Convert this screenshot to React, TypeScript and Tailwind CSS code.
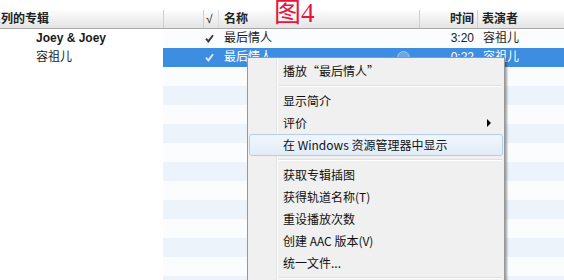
import React from "react";

const FONT = { fontFamily: '"Liberation Sans", "Noto Sans CJK SC", sans-serif' };

interface Track {
  album?: string;
  albumBold?: boolean;
  name?: string;
  time?: string;
  artist?: string;
  selected?: boolean;
}

const tracks: Track[] = [
  { album: "Joey & Joey", albumBold: true, name: "最后情人", time: "3:20", artist: "容祖儿" },
  { album: "容祖儿", name: "最后情人", time: "0:22", artist: "容祖儿", selected: true },
];

function Check({ light }: { light?: boolean }) {
  return (
    <svg width="9" height="9" viewBox="0 0 9 9">
      <path
        d="M1 4.6 L3.4 7.4 L8 1.2"
        fill="none"
        stroke={light ? "#dbe9f8" : "#3a3a3a"}
        strokeWidth="1.9"
      />
    </svg>
  );
}

function Row({ track, index }: { track: Track; index: number }) {
  const stripe = track.selected ? "bg-[#3d8ee0]" : index % 2 === 0 ? "bg-[#fbfcfe]" : "bg-[#edf3fb]";
  const txt = track.selected ? "text-white" : "text-[#1a1a1a]";
  return (
    <div className="flex h-[19px] text-[12px] leading-[19px]">
      <div className={`w-[163px] shrink-0 bg-white pl-[36px] text-[#1a1a1a] ${track.albumBold ? "font-bold" : ""}`}>
        {track.album}
      </div>
      <div className={`flex flex-1 ${stripe} ${txt}`}>
        <div className="w-[42px] shrink-0" />
        <div className="flex w-[14px] shrink-0 items-center">{track.name && <Check light={track.selected} />}</div>
        <div className="relative w-[201px] shrink-0 pl-[5px]">
          {track.name}
          {track.selected && (
            <span className="absolute left-[178px] top-[3px] h-[13px] w-[13px] rounded-full border border-[#9cc3ee] bg-[#6aa8e8]" />
          )}
        </div>
        <div className="w-[58px] shrink-0 pr-[4px] text-right">{track.time}</div>
        <div className="flex-1 pl-[5px]">{track.artist}</div>
      </div>
    </div>
  );
}

function MenuItem({ label, arrow, active }: { label: string; arrow?: boolean; active?: boolean }) {
  return (
    <div
      className={`relative z-10 mx-[1px] flex h-[22px] items-center text-[12px] text-[#111] ${
        active
          ? "rounded-[3px] border border-[#b4cdec] bg-gradient-to-b from-[#f1f6fc] to-[#e2ecf8] pl-[33px]"
          : "pl-[34px]"
      }`}
    >
      <span>{label}</span>
      {arrow && (
        <span className="ml-auto mr-[12px] h-0 w-0 border-y-[4px] border-l-[4px] border-y-transparent border-l-black" />
      )}
    </div>
  );
}

function Separator() {
  return (
    <div className="flex h-[8px] flex-col justify-center pl-[31px] pr-[2px]">
      <div className="h-px bg-[#e0e0e0]" />
      <div className="h-px bg-white" />
    </div>
  );
}

export default function App() {
  const rows: Track[] = [...tracks];
  while (rows.length < 14) rows.push({});

  return (
    <div className="relative h-[280px] w-[564px] overflow-hidden bg-white" style={FONT}>
      <div className="h-[10px]" />

      {/* column header */}
      <div className="flex h-[19px] border-b border-[#a9a9a9] bg-gradient-to-b from-[#fdfdfd] to-[#e4e4e4] text-[12px] font-bold leading-[18px] text-[#222]">
        <div className="w-[164px] shrink-0 overflow-hidden whitespace-nowrap border-r border-[#cfcfcf]">
          <span className="-ml-[11px]">系列的专辑</span>
        </div>
        <div className="w-[40px] shrink-0 border-r border-[#cfcfcf]" />
        <div className="w-[15px] shrink-0 border-r border-[#dcdcdc] pl-[2px] font-normal">√</div>
        <div className="w-[201px] shrink-0 border-r border-[#cfcfcf] pl-[5px]">名称</div>
        <div className="w-[58px] shrink-0 border-r border-[#cfcfcf] pr-[3px] text-right">时间</div>
        <div className="flex-1 pl-[4px]">表演者</div>
      </div>

      {rows.map((t, i) => (
        <Row key={i} track={t} index={i} />
      ))}

      {/* figure label */}
      <div
        className="absolute left-[274px] top-0 text-[27px] leading-[27px] text-[#e3163f]"
        style={{ fontFamily: '"Liberation Serif", "Noto Sans CJK SC", serif' }}
      >
        图4
      </div>

      {/* context menu */}
      <div
        className="absolute left-[247px] top-[57px] w-[258px] border border-[#979797] bg-[#f0f0f0] py-[2px] shadow-[2px_2px_2px_rgba(0,0,0,0.35)]"
        style={{ fontFamily: '"Noto Sans CJK SC", "Liberation Sans", sans-serif' }}
      >
        <div className="absolute bottom-0 left-[28px] top-0 w-[2px] border-l border-r border-l-[#e2e3e3] border-r-white" />
        <MenuItem label="播放“最后情人”" />
        <Separator />
        <MenuItem label="显示简介" />
        <MenuItem label="评价" arrow />
        <MenuItem label="在 Windows 资源管理器中显示" active />
        <Separator />
        <MenuItem label="获取专辑插图" />
        <MenuItem label="获得轨道名称(T)" />
        <MenuItem label="重设播放次数" />
        <MenuItem label="创建 AAC 版本(V)" />
        <MenuItem label="统一文件..." />
        <Separator />
        <MenuItem label="" />
      </div>
    </div>
  );
}
